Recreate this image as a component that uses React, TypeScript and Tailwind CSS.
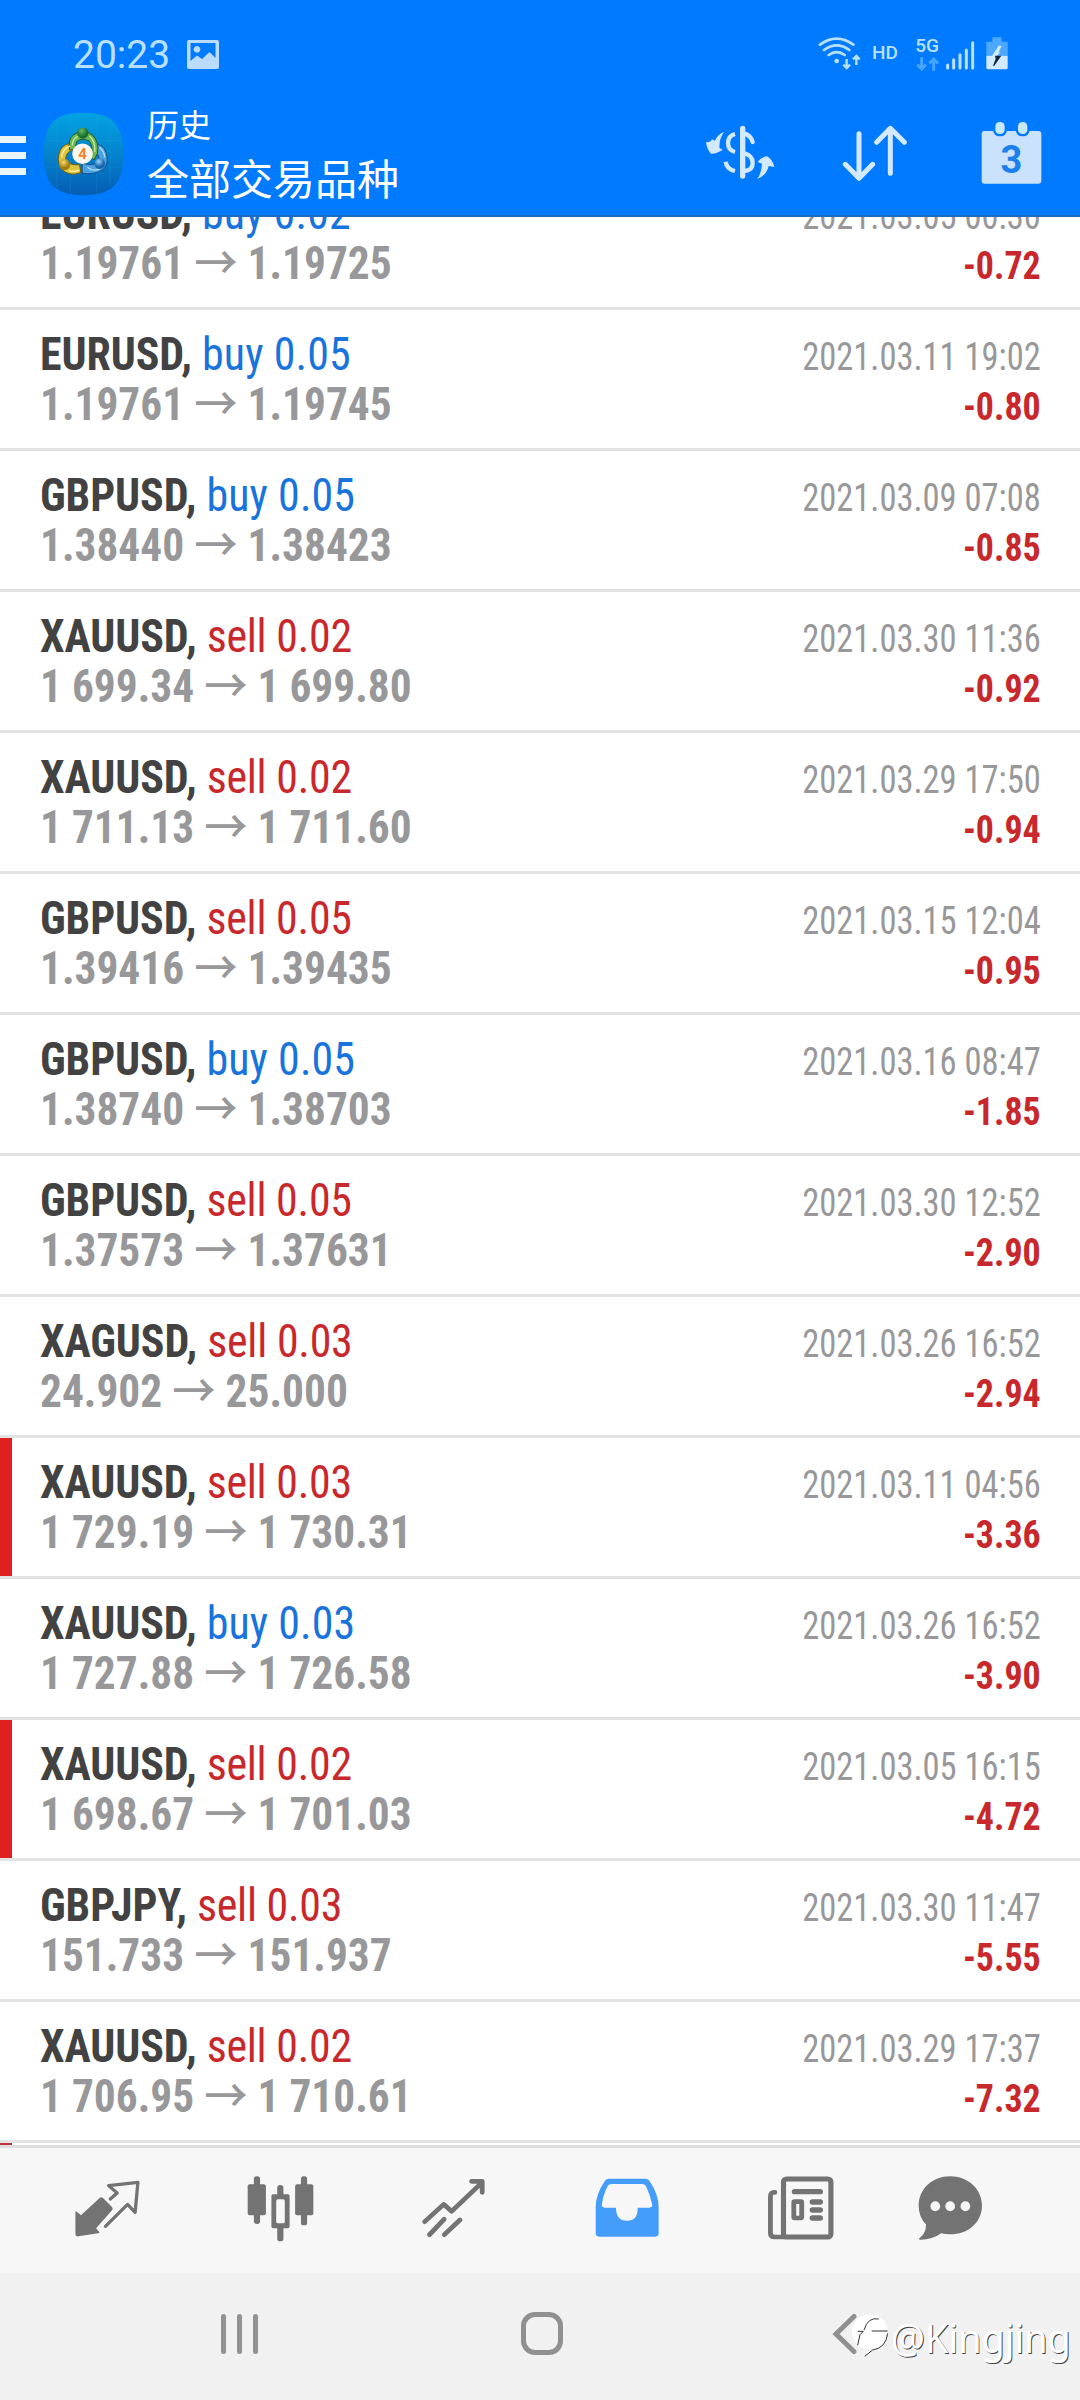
import type { ReactNode } from "react";

type Trade = {
  symbol: string;
  side: "buy" | "sell";
  volume: string;
  open: string;
  close: string;
  time: string;
  profit: string;
  marked?: boolean;
};

const trades: Trade[] = [
  { symbol: "EURUSD", side: "buy", volume: "0.02", open: "1.19761", close: "1.19725", time: "2021.03.05 00:30", profit: "-0.72" },
  { symbol: "EURUSD", side: "buy", volume: "0.05", open: "1.19761", close: "1.19745", time: "2021.03.11 19:02", profit: "-0.80" },
  { symbol: "GBPUSD", side: "buy", volume: "0.05", open: "1.38440", close: "1.38423", time: "2021.03.09 07:08", profit: "-0.85" },
  { symbol: "XAUUSD", side: "sell", volume: "0.02", open: "1 699.34", close: "1 699.80", time: "2021.03.30 11:36", profit: "-0.92" },
  { symbol: "XAUUSD", side: "sell", volume: "0.02", open: "1 711.13", close: "1 711.60", time: "2021.03.29 17:50", profit: "-0.94" },
  { symbol: "GBPUSD", side: "sell", volume: "0.05", open: "1.39416", close: "1.39435", time: "2021.03.15 12:04", profit: "-0.95" },
  { symbol: "GBPUSD", side: "buy", volume: "0.05", open: "1.38740", close: "1.38703", time: "2021.03.16 08:47", profit: "-1.85" },
  { symbol: "GBPUSD", side: "sell", volume: "0.05", open: "1.37573", close: "1.37631", time: "2021.03.30 12:52", profit: "-2.90" },
  { symbol: "XAGUSD", side: "sell", volume: "0.03", open: "24.902", close: "25.000", time: "2021.03.26 16:52", profit: "-2.94" },
  { symbol: "XAUUSD", side: "sell", volume: "0.03", open: "1 729.19", close: "1 730.31", time: "2021.03.11 04:56", profit: "-3.36", marked: true },
  { symbol: "XAUUSD", side: "buy", volume: "0.03", open: "1 727.88", close: "1 726.58", time: "2021.03.26 16:52", profit: "-3.90" },
  { symbol: "XAUUSD", side: "sell", volume: "0.02", open: "1 698.67", close: "1 701.03", time: "2021.03.05 16:15", profit: "-4.72", marked: true },
  { symbol: "GBPJPY", side: "sell", volume: "0.03", open: "151.733", close: "151.937", time: "2021.03.30 11:47", profit: "-5.55" },
  { symbol: "XAUUSD", side: "sell", volume: "0.02", open: "1 706.95", close: "1 710.61", time: "2021.03.29 17:37", profit: "-7.32" },
];

function TradeRow({ t }: { t: Trade }) {
  return (
    <div className="flex h-[141px] shrink-0 border-b-[3px] border-[#e3e3e3] bg-white">
      <div className={t.marked ? "w-3 shrink-0 bg-[#e01f1f]" : "w-3 shrink-0"} />
      <div className="flex flex-1 justify-between pr-[39px] pl-7">
        <div className="pt-[19px] text-[46px] leading-[50px] whitespace-nowrap">
          <div className="origin-left scale-x-[0.955]">
            <span className="font-bold tracking-[-0.1px] text-[#424242]">{t.symbol}, </span>
            <span className={t.side === "buy" ? "tracking-[0.1px] text-[#1874dc]" : "tracking-[-0.25px] text-[#c8282c]"}>
              {t.side} {t.volume}
            </span>
          </div>
          <div className="origin-left scale-x-[0.943] font-bold text-[#98989a]">
            {t.open} <span className="font-['Noto_Sans_CJK_SC'] leading-[0] font-medium">→</span> {t.close}
          </div>
        </div>
        <div className="pt-[22px] text-right text-[38px] leading-[50px] whitespace-nowrap">
          <div className="origin-right scale-x-[0.908] text-[#98989a]">{t.time}</div>
          <div className="origin-right scale-x-[0.945] font-bold text-[#c8282c]">{t.profit}</div>
        </div>
      </div>
    </div>
  );
}

function AppLogo() {
  return (
    <svg className="ml-[17px] h-[84px] w-[81px] shrink-0" viewBox="42 36 244 252">
      <defs>
        <linearGradient id="tile" x1="0" y1="0" x2="0" y2="1">
          <stop offset="0" stopColor="#02a3e4" />
          <stop offset="0.5" stopColor="#0583cc" />
          <stop offset="1" stopColor="#055db4" />
        </linearGradient>
        <radialGradient id="green" cx="0.4" cy="0.3"><stop offset="0" stopColor="#6dbb62" /><stop offset="1" stopColor="#1b6e30" /></radialGradient>
        <radialGradient id="gold" cx="0.4" cy="0.3"><stop offset="0" stopColor="#f7dc6a" /><stop offset="1" stopColor="#a07c0c" /></radialGradient>
        <radialGradient id="sky" cx="0.4" cy="0.3"><stop offset="0" stopColor="#9bd4f7" /><stop offset="1" stopColor="#1566b0" /></radialGradient>
      </defs>
      <path d="M164 38C250 38 284 72 284 162S250 286 164 286 44 252 44 162 78 38 164 38Z" fill="url(#tile)" />
      <path d="M84 60V262M124 42V282M204 42V282M244 60V262M50 122H278M50 202H278" stroke="#35a8e6" strokeOpacity="0.25" strokeWidth="2" fill="none" />
      <g strokeWidth="3">
        <path d="M160 220Q196 226 224 208 242 190 232 158 224 132 198 132L178 150Q208 150 212 178Q204 202 160 190Z" fill="#4da3e2" stroke="#12508e" />
        <path d="M156 218Q120 232 96 206 82 180 94 150 106 128 136 130L140 148Q112 152 110 176 120 198 152 194Z" fill="#dcc53c" stroke="#6f5c0c" />
        <path d="M122 150Q116 118 134 104 162 84 190 104 212 124 206 160L196 180 186 170Q196 140 180 122 160 112 144 124 138 136 142 148Z" fill="#6db653" stroke="#1c5c2f" />
        <path d="M130 136Q132 114 148 108M182 108Q200 124 198 156" stroke="#c5e8a6" strokeWidth="4" fill="none" />
        <path d="M98 172Q100 146 124 138M120 212Q136 218 150 210" stroke="#f9ef9d" strokeWidth="4" fill="none" />
        <path d="M176 202Q196 218 218 204M212 142Q226 152 228 172" stroke="#b5dcf8" strokeWidth="4" fill="none" />
      </g>
      <circle cx="162" cy="99" r="17" fill="url(#green)" />
      <circle cx="107" cy="194" r="17" fill="url(#gold)" />
      <circle cx="213" cy="191" r="16" fill="url(#sky)" />
      <circle cx="161" cy="161" r="31" fill="#fbf6f0" />
      <text x="161" y="177" textAnchor="middle" fontFamily="Roboto" fontWeight="700" fontSize="45" fill="#f0852d">4</text>
    </svg>
  );
}

function StatusBar() {
  return (
    <div className="flex h-[100px] items-start text-[#b9e0ff]">
      <span className="mt-[32px] ml-[73px] font-[Roboto] text-[39px] leading-[46px]">20:23</span>
      <svg className="mt-10 ml-[17px] h-[30px] w-8" viewBox="0 0 32 30">
        <path fillRule="evenodd" fill="#bcdcff" d="M2 0H30Q32 0 32 2V27Q32 29 30 29H2Q0 29 0 27V2Q0 0 2 0ZM3.500 3V21L10 15.500 15 19 22.500 12 28.500 18V3ZM10 6A3.400 3.400 0 1 1 9.990 6Z" />
      </svg>
      <svg className="mt-[37px] ml-auto h-[33px] w-[44px]" viewBox="20 36 132 99" fill="none" stroke="currentColor" strokeLinecap="round">
        <path d="M26 59Q76 23 126 59M38 75Q76 47 114 75M52 90Q76 73 100 90" strokeWidth="8" />
        <circle cx="76" cy="108" r="7" fill="currentColor" stroke="none" />
        <path d="M106 102V128M96 119L106 129 116 119M135 120V94M125 103L135 93 145 103" strokeWidth="7" strokeLinecap="butt" />
      </svg>
      <span className="mt-[42px] ml-[10px] font-[Roboto] text-[19px] leading-[22px] font-medium">HD</span>
      <div className="mt-[35px] ml-[16px] flex w-[26px] flex-col items-center">
        <span className="font-[Roboto] text-[19px] leading-[22px] font-medium">5G</span>
        <svg className="h-[14px] w-[23px]" viewBox="314 96 69 42" fill="none" stroke="#45a5ff" strokeWidth="9">
          <path d="M331 97V130M318 119L331 132 344 119M367 137V103M354 115L367 102 380 115" />
        </svg>
      </div>
      <svg className="mt-[41px] ml-[6px] h-[29px] w-[29px]" viewBox="407 47 87 87" stroke="currentColor" strokeWidth="9" strokeLinecap="round">
        <path d="M412 119V128M430 103V128M449 88V128M468 74V128M487 52V128" />
      </svg>
      <svg className="mt-[37px] mr-[72px] ml-[11px] h-[33px] w-[22px]" viewBox="527 36 66 99">
        <path d="M546 37H574V50H592V92H528V50H546Z" fill="#4da9ff" />
        <path d="M528 92H592V128Q592 133 587 133H533Q528 133 528 128Z" fill="#d2eaff" />
        <path d="M565 62L543 96H556L572 80 564 84 574 62Z" fill="#d2eaff" />
        <path d="M554 92H573L551 124Q548 124 549 120L556 101Z" fill="#10263f" />
      </svg>
    </div>
  );
}

function Toolbar() {
  return (
    <div className="flex h-[115px] items-start text-[#d3e9ff]">
      <div className="mt-[36px] flex w-[26px] shrink-0 flex-col gap-[9px]">
        <div className="h-[7px] bg-[#e8f5ff]" />
        <div className="h-[7px] bg-[#e8f5ff]" />
        <div className="h-[7px] bg-[#e8f5ff]" />
      </div>
      <div className="mt-3"><AppLogo /></div>
      <div className="ml-[23px] flex flex-col font-['Noto_Sans_CJK_SC',sans-serif] whitespace-nowrap text-white">
        <span className="text-[32px] leading-[46px]">历史</span>
        <span className="mt-[1px] text-[42px] leading-[60px]">全部交易品种</span>
      </div>
      <svg className="mt-[25px] ml-auto h-[55px] w-[70px]" viewBox="45 45 210 165" fill="currentColor">
        <path d="M102 66Q84 72 75 92L66 88Q64 97 48 97Q51 120 64 132Q82 130 98 120L88 113Q88 84 102 66Z" />
        <path d="M203 156Q212 141 232 139Q248 150 253 171L236 168Q230 196 202 207Q214 190 216 161Z" />
        <path d="M135 72Q114 78 114 99T135 126M107 155Q110 178 135 183" fill="none" stroke="currentColor" strokeWidth="13" strokeLinecap="butt" />
        <path d="M158 55V198" stroke="currentColor" strokeWidth="16" strokeLinecap="round" />
        <path d="M164 71Q182 76 188 96M163 130Q188 136 188 159T163 183" fill="none" stroke="currentColor" strokeWidth="13" strokeLinecap="round" />
      </svg>
      <svg className="mt-[25px] ml-[66px] h-[57px] w-[67px]" viewBox="457 45 201 171" fill="none" stroke="currentColor" strokeWidth="15" strokeLinecap="round" strokeLinejoin="round">
        <path d="M511 71V204M470 163L511 205 552 163M605 190V56M564 97L605 55 647 97" />
      </svg>
      <div className="relative mt-[21px] mr-[38px] ml-[73px] h-[64px] w-[61px]">
        <svg className="h-[64px] w-[61px]" viewBox="875 34 183 192">
          <path d="M885 64H1047Q1056 64 1056 73V213Q1056 222 1047 222H886Q877 222 877 213V73Q877 64 885 64Z" fill="#cbe2fd" />
          <rect x="911" y="30" width="42" height="50" rx="19" fill="#007aff" />
          <rect x="979" y="30" width="42" height="50" rx="19" fill="#007aff" />
          <rect x="918" y="37" width="28" height="36" rx="13" fill="#c6e8fb" />
          <rect x="986" y="37" width="28" height="36" rx="13" fill="#c6e8fb" />
        </svg>
        <span className="absolute inset-x-0 top-[17px] text-center font-[Roboto] text-[38px] leading-[44px] font-bold text-[#1a80ec]">3</span>
      </div>
    </div>
  );
}

function Tab({ children, last }: { children: ReactNode; last?: boolean }) {
  return <div className={last ? "flex w-[125px] justify-center" : "flex w-[173.5px] justify-center"}>{children}</div>;
}

function TabBar() {
  return (
    <div className="flex h-[128px] shrink-0 items-start border-t-[3px] border-[#dedede] bg-[#f7f7f7] pt-[28px] pl-5 text-[#737373]">
      <Tab>
        <svg className="mt-[3px] h-[60px] w-[68px]" preserveAspectRatio="none" viewBox="214 178 197 180">
          <path d="M221 276Q221 273 225 276L237 287 291 235Q296 231 301 235L327 262Q331 267 327 272L281 326 290 337Q292 340 287 341L230 350Q221 352 221 344Z" fill="currentColor" />
          <path d="M322 238L342 220 317 198 402 188 394 278 372 254 308 320" fill="none" stroke="currentColor" strokeWidth="9.500" strokeLinejoin="round" strokeLinecap="round" />
        </svg>
      </Tab>
      <Tab>
        <svg className="h-[66px] w-[67px]" preserveAspectRatio="none" viewBox="716 167 195 198" fill="currentColor">
          <rect x="718" y="192" width="53" height="93" rx="6" />
          <rect x="736" y="168" width="18" height="143" rx="8" />
          <rect x="856" y="192" width="53" height="93" rx="6" />
          <rect x="873" y="168" width="18" height="147" rx="8" />
          <path fillRule="evenodd" d="M792 222H804V202Q804 194 813 194T822 202V222H835Q840 222 840 228V318Q840 324 835 324H822V355Q822 363 813 363T804 355V324H792Q787 324 787 318V228Q787 222 792 222ZM806 237Q801 237 801 242V304Q801 309 806 309H821Q826 309 826 304V242Q826 237 821 237Z" />
        </svg>
      </Tab>
      <Tab>
        <svg className="mt-[2px] h-[60px] w-[64px]" preserveAspectRatio="none" viewBox="1224 174 186 180" fill="none" stroke="currentColor" strokeWidth="14" strokeLinecap="round" strokeLinejoin="round">
          <path d="M1232 305L1287 253 1310 274 1398 188M1368 184H1399V217M1246 344L1288 298M1289 344L1334 300" />
        </svg>
      </Tab>
      <Tab>
        <svg className="mt-[2px] h-[59px] w-[64px] text-[#449dfb]" preserveAspectRatio="none" viewBox="160 175 186 177">
          <path fillRule="evenodd" fill="currentColor" d="M201 177H306Q314 177 318 183Q345 224 345 262V341Q345 351 335 351H172Q162 351 162 341V262Q162 224 189 183Q193 177 201 177ZM208 193Q200 193 197 199Q184 224 180 254Q179 264 188 264H221Q221 303 253 303T284 264H318Q328 264 326 254Q320 224 308 199Q305 193 297 193Z" />
        </svg>
      </Tab>
      <Tab>
        <svg className="h-[65px] w-[67px]" preserveAspectRatio="none" viewBox="662 167 195 195" fill="none" stroke="currentColor" strokeLinecap="round">
          <rect x="710" y="176" width="138" height="174" rx="9" strokeWidth="15" />
          <path d="M685 216Q672 214 672 230V338Q672 350 684 350H716" strokeWidth="14" />
          <path d="M742 214H817M794 245H817M794 269H817M794 293H817" strokeWidth="16" />
          <rect x="740" y="244" width="23" height="49" rx="2" strokeWidth="14" />
        </svg>
      </Tab>
      <Tab last>
        <svg className="h-[65px] w-[65px]" preserveAspectRatio="none" viewBox="1100 167 188 195">
          <path fill="currentColor" d="M1193 168C1245 168 1285 206 1285 256S1245 342 1193 342Q1180 342 1167 339Q1142 358 1107 358Q1100 358 1105 353Q1124 338 1123 312Q1102 290 1102 256C1102 206 1141 168 1193 168Z" />
          <g fill="#f7f7f7"><ellipse cx="1150" cy="258" rx="14" ry="15" /><ellipse cx="1193" cy="258" rx="14" ry="15" /><ellipse cx="1237" cy="258" rx="14" ry="15" /></g>
        </svg>
      </Tab>
    </div>
  );
}

function SystemNav() {
  return (
    <div className="relative flex h-[127px] shrink-0 items-start bg-[#f1f1f1] pt-[39px]">
      <div className="mt-[2px] ml-[221px] flex gap-[11px]">
        <div className="h-10 w-[5px] rounded-full bg-[#929292]" />
        <div className="h-10 w-[5px] rounded-full bg-[#929292]" />
        <div className="h-10 w-[5px] rounded-full bg-[#929292]" />
      </div>
      <div className="ml-[263px] h-[43px] w-[42px] rounded-[14px] border-[5px] border-[#909090]" />
      <svg className="mt-[1px] ml-[269px] h-[42px] w-[26px]" viewBox="0 0 26 42" fill="none" stroke="#909090" strokeWidth="5" strokeLinecap="round">
        <path d="M22 3.500L4 21 22 38.500" />
      </svg>
      <div className="absolute top-[37px] left-[852px] flex items-start">
        <svg className="mt-[4px] h-[46px] w-[37px]" viewBox="36 120 111 138">
          <path d="M92 122A52 52 0 0 1 144 174Q140 222 98 228L74 247 84 226A52 52 0 1 1 92 122Z" fill="#fff" />
          <path d="M116 135Q84 128 72 168M53 172H70L60 182 53 214M95 171H143M143 178Q138 222 98 228L74 247" fill="none" stroke="#333" strokeWidth="3" />
        </svg>
        <span className="ml-[2px] inline-block origin-left scale-x-[0.945] font-['Noto_Sans',sans-serif] text-[40px] leading-[56px] text-white [text-shadow:1px_1px_0.5px_#444]">@Kingjing</span>
      </div>
    </div>
  );
}

export default function App() {
  return (
    <div className="flex h-[2400px] w-[1080px] flex-col overflow-hidden bg-white font-['Roboto_Condensed',Roboto,sans-serif]">
      <header className="shrink-0 border-b-2 border-[#1c6cc4] bg-[#007aff]">
        <StatusBar />
        <Toolbar />
      </header>
      <main className="flex h-[1928px] shrink-0 flex-col overflow-hidden">
        <div className="-mt-12 flex shrink-0 flex-col">
          {trades.map((t, i) => (
            <TradeRow key={i} t={t} />
          ))}
          <div className="h-[141px] w-3 bg-[#c22f3c]" />
        </div>
      </main>
      <TabBar />
      <SystemNav />
    </div>
  );
}
